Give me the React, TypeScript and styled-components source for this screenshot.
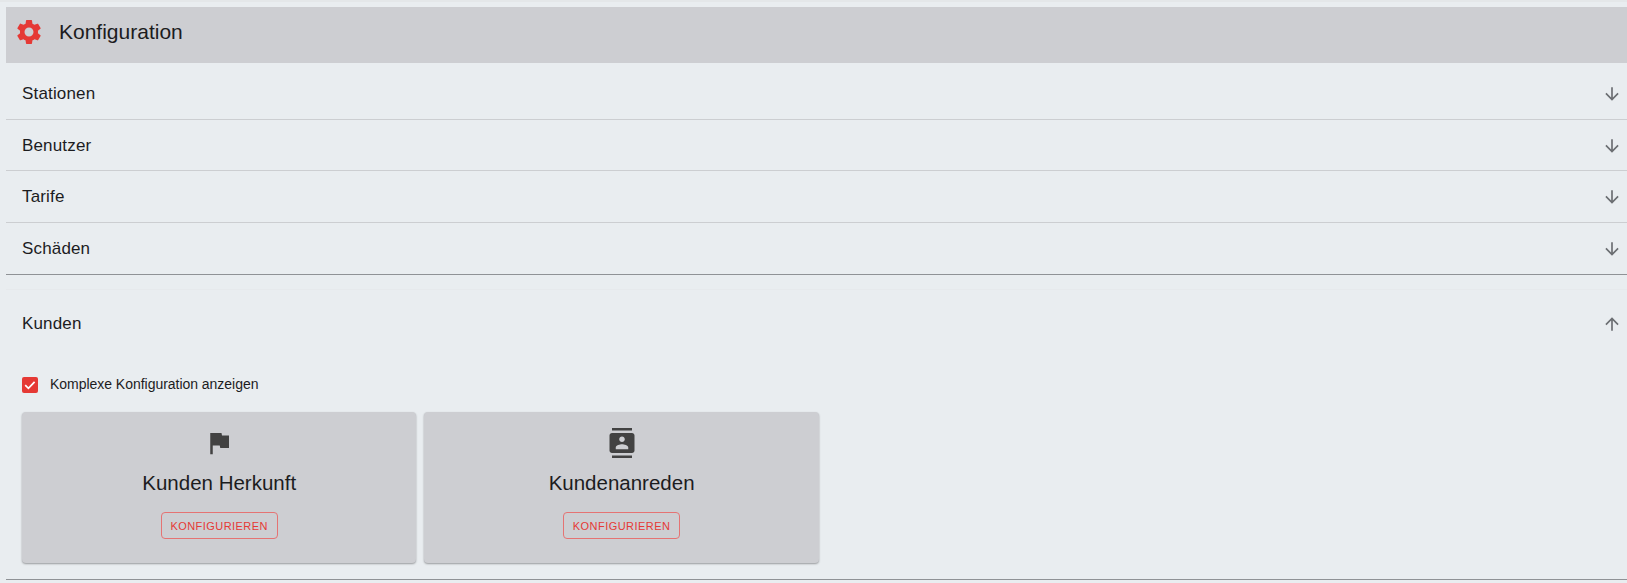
import React from 'react'
import styled, { createGlobalStyle } from 'styled-components'

const GEAR_PATH =
  'M19.14 12.94c.04-.3.06-.61.06-.94 0-.32-.02-.64-.07-.94l2.03-1.58c.18-.14.23-.41.12-.61l-1.92-3.32c-.12-.22-.37-.29-.59-.22l-2.39.96c-.5-.38-1.03-.7-1.62-.94l-.36-2.54c-.04-.24-.24-.41-.48-.41h-3.84c-.24 0-.43.17-.47.41l-.36 2.54c-.59.24-1.13.57-1.62.94l-2.39-.96c-.22-.08-.47 0-.59.22L2.74 8.87c-.12.21-.08.47.12.61l2.03 1.58c-.05.3-.09.63-.09.94s.02.64.07.94l-2.03 1.58c-.18.14-.23.41-.12.61l1.92 3.32c.12.22.37.29.59.22l2.39-.96c.5.38 1.03.7 1.62.94l.36 2.54c.05.24.24.41.48.41h3.84c.24 0 .44-.17.47-.41l.36-2.54c.59-.24 1.13-.56 1.62-.94l2.39.96c.22.08.47 0 .59-.22l1.92-3.32c.12-.22.07-.47-.12-.61l-2.01-1.58zM12 15.6c-1.98 0-3.6-1.62-3.6-3.6s1.62-3.6 3.6-3.6 3.6 1.62 3.6 3.6-1.62 3.6-3.6 3.6z'
const FLAG_PATH = 'M14.4 6 14 4H5v17h2v-7h5.6l.4 2h7V6z'
const CONTACTS_PATH =
  'M20 0H4v2h16V0zM4 24h16v-2H4v2zM20 4H4c-1.1 0-2 .9-2 2v12c0 1.1.9 2 2 2h16c1.1 0 2-.9 2-2V6c0-1.1-.9-2-2-2zm-8 2.75c1.24 0 2.25 1.01 2.25 2.25s-1.01 2.25-2.25 2.25S9.75 10.24 9.75 9 10.76 6.75 12 6.75zM17 17H7v-1.5c0-1.67 3.33-2.5 5-2.5s5 .83 5 2.5V17z'
const ARROW_DOWN_PATH = 'M20 12l-1.41-1.41L13 16.17V4h-2v12.17l-5.58-5.59L4 12l8 8 8-8z'
const ARROW_UP_PATH = 'M4 12l1.41 1.41L11 7.83V20h2V7.83l5.58 5.59L20 12l-8-8-8 8z'

const closedSections = ['Stationen', 'Benutzer', 'Tarife', 'Schäden']

const cards = [
  { title: 'Kunden Herkunft', icon: FLAG_PATH },
  { title: 'Kundenanreden', icon: CONTACTS_PATH },
]

const App = () => (
  <>
    <GlobalStyle />
    <Page>
      <Header>
        <GearIcon viewBox="0 0 24 24">
          <path d={GEAR_PATH} />
        </GearIcon>
        <HeaderTitle>Konfiguration</HeaderTitle>
      </Header>
      <ClosedList>
        {closedSections.map((name, idx) => (
          <SectionRow key={name} $strong={idx === closedSections.length - 1}>
            <span>{name}</span>
            <ArrowIcon viewBox="0 0 24 24">
              <path d={ARROW_DOWN_PATH} />
            </ArrowIcon>
          </SectionRow>
        ))}
        <LastRowGap />
      </ClosedList>
      <OpenSection>
        <OpenHeader>
          <span>Kunden</span>
          <ArrowIcon viewBox="0 0 24 24">
            <path d={ARROW_UP_PATH} />
          </ArrowIcon>
        </OpenHeader>
        <CheckRow>
          <CheckBox>
            <svg viewBox="0 0 16 16" width="16" height="16">
              <path d="M3.2 8.2l3.2 3.2 6.2-6.6" fill="none" stroke="#fff" strokeWidth="1.7" />
            </svg>
          </CheckBox>
          <CheckLabel>Komplexe Konfiguration anzeigen</CheckLabel>
        </CheckRow>
        <CardRow>
          {cards.map((card) => (
            <Card key={card.title}>
              <CardIcon viewBox="0 0 24 24">
                <path d={card.icon} />
              </CardIcon>
              <CardTitle>{card.title}</CardTitle>
              <ConfigButton>Konfigurieren</ConfigButton>
            </Card>
          ))}
        </CardRow>
      </OpenSection>
    </Page>
  </>
)

export default App

const GlobalStyle = createGlobalStyle`
  html, body {
    margin: 0;
    padding: 0;
    background: #e9edf0;
  }

  body {
    font-family: "Liberation Sans", Arial, sans-serif;
    color: #1c1c1e;
    overflow: hidden;
  }
`

const Page = styled.div`
  padding: 5px 0 0 6px;
  height: 583px;
  box-sizing: border-box;
  border-top: 2px solid #e4e7e9;
`

const Header = styled.div`
  display: flex;
  align-items: center;
  box-sizing: border-box;
  height: 56px;
  background: #cdced2;
  padding: 0 0 7px 8px;
  margin-bottom: 5px;
`

const GearIcon = styled.svg`
  width: 30px;
  height: 30px;
  fill: #e53935;
  margin-right: 15px;
`

const HeaderTitle = styled.div`
  font-size: 21px;
`

const ClosedList = styled.div`
  display: flex;
  flex-direction: column;
`

const SectionRow = styled.div<{ $strong?: boolean }>`
  display: flex;
  align-items: center;
  justify-content: space-between;
  height: ${(props) => (props.$strong ? '52.4px' : '51.6px')};
  box-sizing: border-box;
  padding: 2px 5px 0 16px;
  font-size: 17px;
  letter-spacing: 0.16px;
  border-bottom: 1px solid ${(props) => (props.$strong ? '#8f9296' : '#ccced1')};
`

const LastRowGap = styled.div`
  height: 14px;
`

const ArrowIcon = styled.svg`
  width: 20px;
  height: 20px;
  fill: #6b6e72;
`

const OpenSection = styled.div`
  border-top: 1px solid #e6e9ec;
  border-bottom: 1px solid #8f9296;
  padding-bottom: 16px;
`

const OpenHeader = styled.div`
  display: flex;
  align-items: center;
  justify-content: space-between;
  height: 67px;
  padding: 0 5px 0 16px;
  font-size: 17px;
  letter-spacing: 0.16px;
`

const CheckRow = styled.div`
  display: flex;
  align-items: center;
  gap: 12px;
  padding-left: 16px;
  margin-top: 18px;
  height: 20px;
`

const CheckLabel = styled.span`
  font-size: 14px;
  letter-spacing: -0.03px;
  margin-top: -2px;
`

const CheckBox = styled.span`
  display: block;
  width: 16px;
  height: 16px;
  border-radius: 2px;
  background: #e53935;
`

const CardRow = styled.div`
  display: flex;
  gap: 8px;
  padding-left: 16px;
  margin-top: 17px;
`

const Card = styled.div`
  display: flex;
  flex-direction: column;
  align-items: center;
  box-sizing: border-box;
  width: 394.4px;
  height: 151px;
  padding-top: 16px;
  background: #cdced2;
  border-radius: 4px;
  box-shadow: 0 1px 2px rgba(0, 0, 0, 0.35);
`

const CardIcon = styled.svg`
  width: 30px;
  height: 30px;
  fill: #424242;
`

const CardTitle = styled.div`
  font-size: 20.5px;
  line-height: 24px;
  margin-top: 13px;
`

const ConfigButton = styled.button`
  box-sizing: border-box;
  width: 117px;
  height: 27px;
  margin-top: 17px;
  padding: 0;
  background: transparent;
  border: 1px solid #e57373;
  border-radius: 4px;
  color: #e53935;
  font-family: "Liberation Sans", Arial, sans-serif;
  font-size: 11px;
  letter-spacing: 0.45px;
  text-transform: uppercase;
`
